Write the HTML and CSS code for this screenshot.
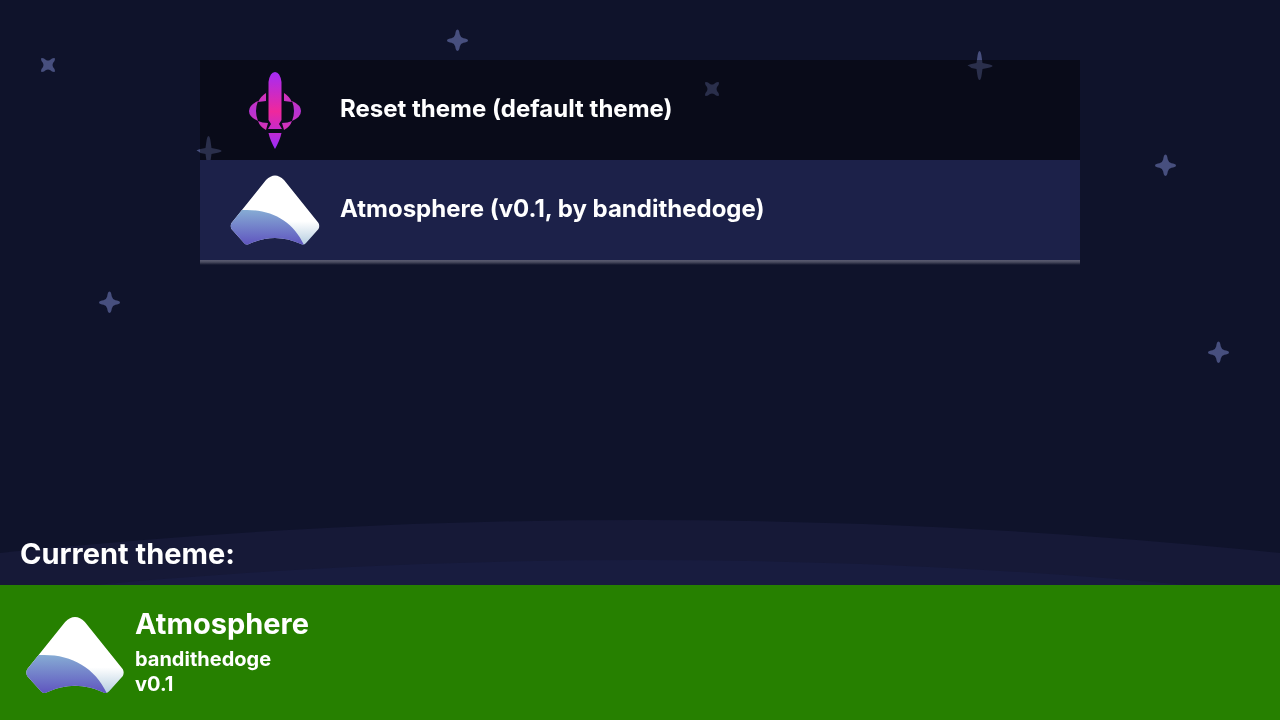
FILE: index.html
```html
<!DOCTYPE html>
<html lang="en">
<head>
<meta charset="utf-8">
<meta name="viewport" content="width=device-width, initial-scale=1">
<title>Themes</title>
<link rel="stylesheet" href="styles.css">
</head>
<body>
<svg class="backdrop" viewBox="0 0 1280 720" preserveAspectRatio="xMidYMid slice" aria-hidden="true">
  <defs>
    <path id="star" d="M0-11C1.500-11 2-8 2.300-6Q3-3 6-2.300C8-2 10.500-1.500 10.500 0C10.500 1.500 8 2 6 2.300Q3 3 2.300 6C2 8 1.500 10.500 0 10.500C-1.500 10.500-2 8-2.300 6Q-3 3-6 2.300C-8 2-10.500 1.500-10.500 0C-10.500-1.500-8-2-6-2.300Q-3-3-2.300-6C-2-8-1.500-11 0-11Z"/>
    <path id="bigstar" d="M0-15Q1.500-15 2.300-8L3-3L8-2Q13-1.200 13 0Q13 1.200 8 2L3 3L2.300 8Q1.500 14 0 14Q-1.500 14-2.300 8L-3 3L-8 2Q-12-1.200-12 0Q-12-1.200-8-2L-3-3L-2.300-8Q-1.500-15 0-15Z"/>
    <path id="spark" d="M-6-7Q-4-7-2-5Q0-4 2-5Q4-7 6-7Q7-7 7-6Q7-4 5-2Q4 0 5 2Q7 4 7 6Q7 7 6 7Q4 7 2 5Q0 4-2 5Q-4 7-6 7Q-7 7-7 6Q-7 4-5 2Q-4 0-5-2Q-7-4-7-6Q-7-7-6-7Z"/>
  </defs>
  <circle class="hill-back" cx="640" cy="6720" r="6200"/>
  <circle class="hill-front" cx="640" cy="6560" r="6000"/>
  <g class="stars">
    <use href="#spark" x="48" y="65"/>
    <use href="#spark" x="712" y="89"/>
    <use href="#star" x="457.500" y="40.500"/>
    <use href="#star" x="1165.500" y="165.500"/>
    <use href="#star" x="109.500" y="302.500"/>
    <use href="#star" x="1218.500" y="352.500"/>
    <use href="#bigstar" x="979.500" y="66"/>
    <use href="#bigstar" x="208.500" y="151"/>
  </g>
</svg>
<svg class="definitions" aria-hidden="true">
  <defs>
    <linearGradient id="snow" gradientUnits="userSpaceOnUse" x1="0" y1="15" x2="0" y2="85">
      <stop offset=".66" stop-color="#fff"/><stop offset="1" stop-color="#b5cde0"/>
    </linearGradient>
    <linearGradient id="sky" gradientUnits="userSpaceOnUse" x1="0" y1="50" x2="0" y2="85">
      <stop offset="0" stop-color="#86acd4"/><stop offset="1" stop-color="#5f54bf"/>
    </linearGradient>
    <clipPath id="peak"><path d="M41 20Q50 11 59 20L93.500 63Q95 66 93.500 69L81 83Q79 85.500 76 84Q50 72 24 84Q21 85.500 19 83L6.500 69Q5 66 6.500 63Z"/></clipPath>
    <symbol id="atmosphere" viewBox="0 0 100 100">
      <g clip-path="url(#peak)">
        <path fill="url(#snow)" d="M0 0H100V100H0Z"/>
        <path fill="url(#sky)" d="M0 50H19C46 49 68 61 79 85V100H0Z"/>
      </g>
    </symbol>
  </defs>
</svg>
<main class="page">
  <ul class="theme-list">
    <li>
      <button class="theme" type="button">
        <svg class="theme-icon" viewBox="0 0 100 100" aria-hidden="true">
          <defs>
            <linearGradient id="body" gradientUnits="userSpaceOnUse" x1="0" y1="12" x2="0" y2="88">
              <stop offset="0" stop-color="#a42cf5"/><stop offset=".52" stop-color="#ef289c"/><stop offset="1" stop-color="#9c2cfa"/>
            </linearGradient>
            <linearGradient id="wing" gradientUnits="userSpaceOnUse" x1="0" y1="32" x2="0" y2="70">
              <stop offset="0" stop-color="#d832b4"/><stop offset=".5" stop-color="#b832d2"/><stop offset="1" stop-color="#d832b4"/>
            </linearGradient>
            <g id="wing-left" fill="url(#wing)">
              <path d="M41 33V41L33 42Q36 36 41 33Z"/>
              <path d="M33 41Q29 51 33 61Q24 57 24 51Q24 45 33 41Z"/>
              <path d="M33 61Q37 63 43 63L41 70Q35 67 33 61Z"/>
            </g>
          </defs>
          <path fill="url(#body)" d="M43.500 60V22Q45 12 50 12Q55 12 56.500 22V60L54 64L57 69H43L46 64ZM43.500 73H56.500Q55 80 50 89Q45 80 43.500 73Z"/>
          <use href="#wing-left"/>
          <use href="#wing-left" transform="translate(100 0) scale(-1 1)"/>
        </svg>
        <span>Reset theme (default theme)</span>
      </button>
    </li>
    <li>
      <button class="theme theme-selected" type="button">
        <svg class="theme-icon" aria-hidden="true"><use href="#atmosphere"/></svg>
        <span>Atmosphere (v0.1, by bandithedoge)</span>
      </button>
    </li>
  </ul>
  <h2 class="current-label">Current theme:</h2>
  <section class="current" aria-label="Current theme">
    <svg class="current-icon" aria-hidden="true"><use href="#atmosphere"/></svg>
    <div>
      <h3 class="current-name">Atmosphere</h3>
      <p class="current-detail">bandithedoge</p>
      <p class="current-detail">v0.1</p>
    </div>
  </section>
</main>
</body>
</html>
```
FILE: styles.css
```css
* {
  box-sizing: border-box;
}

body {
  margin: 0;
  background: #0f132b;
  color: #fff;
  font-family: Inter, "Open Sans", sans-serif;
}

.backdrop {
  position: fixed;
  inset: 0;
  z-index: -1;
  width: 100%;
  height: 100%;
}

.definitions {
  position: absolute;
  width: 0;
  height: 0;
}

.hill-back {
  fill: #161937;
}

.hill-front {
  fill: #181c3f;
}

.stars {
  fill: #474f7e;
}

.page {
  display: flex;
  flex-direction: column;
  min-height: 100vh;
  padding-top: 60px;
}

.theme-list {
  margin: 0 200px;
  padding: 0;
  list-style: none;
}

.theme-list::after {
  content: "";
  display: block;
  height: 5px;
  background: linear-gradient(#5b5c72, #4a4c60 40%, #0f132b);
}

.theme {
  display: flex;
  align-items: center;
  gap: 15px;
  width: 100%;
  padding: 0 25px;
  border: 0;
  background: rgba(0, 0, 0, 0.4);
  color: inherit;
  font: 700 24px/30px Inter, "Open Sans", sans-serif;
  text-align: left;
}

.theme-selected {
  background: #1c2149;
}

.theme-icon {
  flex: none;
  width: 100px;
  height: 100px;
}

.theme span {
  padding-bottom: 2px;
}

.current-label {
  margin: auto 20px 11px;
  font-size: 29px;
  font-weight: 700;
  line-height: 40px;
}

.current {
  display: flex;
  gap: 5px;
  padding: 15px 20px 10px;
  background: #268000;
}

.current-icon {
  flex: none;
  width: 110px;
  height: 110px;
}

.current-name {
  margin: 4px 0 3px;
  font-size: 29px;
  font-weight: 700;
  line-height: 40px;
}

.current-detail {
  margin: 0;
  font-size: 20px;
  font-weight: 700;
  line-height: 25px;
}
```
